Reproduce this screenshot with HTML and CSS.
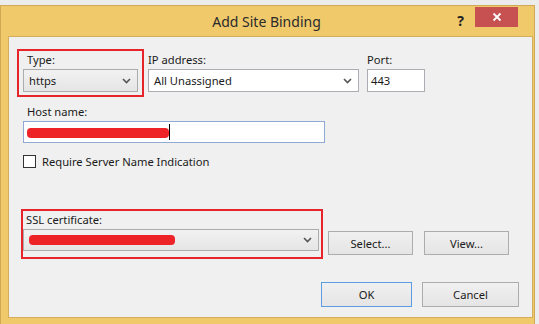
FILE: index.html
```html
<!DOCTYPE html>
<html lang="en">
<head>
  <meta charset="UTF-8" />
  <title>Add Site Binding</title>
  <link rel="stylesheet" href="styles.css">
</head>
<body>
  <div class="window">
    <div class="titlebar">
      <span class="title">Add Site Binding</span>
      <span class="help">?</span>
      <span class="close">
        <svg width="10" height="10" viewBox="0 0 10 10"><path d="M1.5 1.5 L8.5 8.5 M8.5 1.5 L1.5 8.5" stroke="#fff" stroke-width="1.8" fill="none"/></svg>
      </span>
    </div>

    <div class="client">
      <div class="row top-row">
        <div class="mark type-box">
          <div class="label indent">Type:</div>
          <div class="combo gray type-combo">
            <span>https</span>
            <svg class="chev" width="9" height="6" viewBox="0 0 9 6"><path d="M1 1 L4.5 4.5 L8 1" stroke="#555" stroke-width="1.6" fill="none"/></svg>
          </div>
        </div>
        <div class="field ip-field">
          <div class="label">IP address:</div>
          <div class="combo white">
            <span>All Unassigned</span>
            <svg class="chev" width="9" height="6" viewBox="0 0 9 6"><path d="M1 1 L4.5 4.5 L8 1" stroke="#555" stroke-width="1.6" fill="none"/></svg>
          </div>
        </div>
        <div class="field port-field">
          <div class="label">Port:</div>
          <div class="textbox">443</div>
        </div>
      </div>

      <div class="field host-field">
        <div class="label indent">Host name:</div>
        <div class="textbox focused">
          <span class="redact host-redact"></span>
          <span class="caret"></span>
        </div>
      </div>

      <div class="check-row">
        <span class="checkbox"></span>
        <span>Require Server Name Indication</span>
      </div>

      <div class="row ssl-row">
        <div class="mark ssl-box">
          <div class="label ssl-label">SSL certificate:</div>
          <div class="combo gray ssl-combo">
            <span class="redact ssl-redact"></span>
            <svg class="chev" width="9" height="6" viewBox="0 0 9 6"><path d="M1 1 L4.5 4.5 L8 1" stroke="#555" stroke-width="1.6" fill="none"/></svg>
          </div>
        </div>
        <button class="btn select-btn">Select...</button>
        <button class="btn view-btn">View...</button>
      </div>

      <div class="row footer">
        <button class="btn ok-btn">OK</button>
        <button class="btn cancel-btn">Cancel</button>
      </div>
    </div>
  </div>
</body>
</html>
```

FILE: styles.css
```css
body {
  margin: 0;
  background: #ececec;
  font-family: "Noto Sans", "Open Sans", sans-serif;
  font-size: 11.2px;
  color: #1a1a1a;
  overflow: hidden;
}
.window {
  box-sizing: border-box;
  width: 535px;
  height: 320px;
  margin-top: 5px;
  background: #f0c96b;
  border: 1px solid #cfa955;
  padding: 0 1px 6px 7px;
  display: flex;
  flex-direction: column;
}
.titlebar {
  height: 30px;
  position: relative;
  display: flex;
  justify-content: center;
  align-items: center;
}
.title {
  font-size: 14px;
  color: #2b2b2b;
  margin-right: 8px;
}
.help {
  position: absolute;
  right: 69px;
  top: 5px;
  font-weight: bold;
  font-size: 14px;
  color: #222;
}
.close {
  position: absolute;
  right: 15px;
  top: 1px;
  width: 43px;
  height: 20px;
  background: #c75050;
  display: flex;
  justify-content: center;
  align-items: center;
}
.client {
  flex: 1;
  background: #f0f0f0;
  border: 1px solid #d4ae5b;
}
.row {
  display: flex;
  align-items: flex-start;
}
.top-row {
  margin-top: 12px;
}
.mark {
  box-sizing: border-box;
  border: 2px solid #e8242b;
}
.type-box {
  width: 127px;
  margin-left: 8px;
  padding: 1px 4px 3px 4px;
}
.label {
  height: 15px;
  line-height: 15px;
  margin-bottom: 2px;
  white-space: nowrap;
}
.indent {
  padding-left: 4px;
}
.combo {
  box-sizing: border-box;
  height: 23px;
  display: flex;
  align-items: center;
  justify-content: space-between;
  padding: 0 6px 0 5px;
}
.combo.gray {
  border: 1px solid #acacac;
  background: linear-gradient(#f2f2f2, #e5e5e5);
}
.combo.white {
  border: 1px solid #abadb3;
  background: #fff;
}
.ip-field {
  width: 211px;
  margin: 3px 0 0 4px;
}
.port-field {
  width: 58px;
  margin: 3px 0 0 8px;
}
.textbox {
  box-sizing: border-box;
  height: 23px;
  border: 1px solid #abadb3;
  background: #fff;
  display: flex;
  align-items: center;
  padding-left: 3px;
}
.host-field {
  width: 302px;
  margin: 7px 0 0 14px;
}
.textbox.focused {
  height: 22px;
  border-color: #8fa9d2;
  padding-left: 3px;
}
.redact {
  display: inline-block;
  background: #ee2328;
  border-radius: 4px;
}
.host-redact {
  width: 142px;
  height: 10px;
  margin-top: 2px;
}
.caret {
  width: 1px;
  height: 16px;
  background: #000;
}
.check-row {
  display: flex;
  align-items: center;
  margin: 11px 0 0 14px;
}
.checkbox {
  box-sizing: border-box;
  width: 13px;
  height: 13px;
  border: 1px solid #333;
  background: #fff;
  margin-right: 6px;
}
.ssl-row {
  margin-top: 40px;
}
.ssl-box {
  width: 302px;
  margin-left: 12px;
  padding: 1px 2px 6px 0;
}
.ssl-label {
  padding-left: 3px;
}
.ssl-combo {
  height: 22px;
  padding-left: 5px;
}
.ssl-redact {
  width: 146px;
  height: 10px;
}
.btn {
  box-sizing: border-box;
  font: inherit;
  color: #1a1a1a;
  border: 1px solid #acacac;
  background: linear-gradient(#f0f0f0, #e5e5e5);
  padding: 0;
}
.select-btn {
  width: 85px;
  height: 24px;
  margin: 22px 0 0 5px;
}
.view-btn {
  width: 85px;
  height: 24px;
  margin: 22px 0 0 11px;
}
.footer {
  margin-top: 23px;
  justify-content: flex-end;
  padding-right: 13px;
}
.ok-btn {
  width: 91px;
  height: 25px;
  border-color: #5b9de0;
}
.cancel-btn {
  width: 97px;
  height: 25px;
  margin-left: 10px;
}
```
